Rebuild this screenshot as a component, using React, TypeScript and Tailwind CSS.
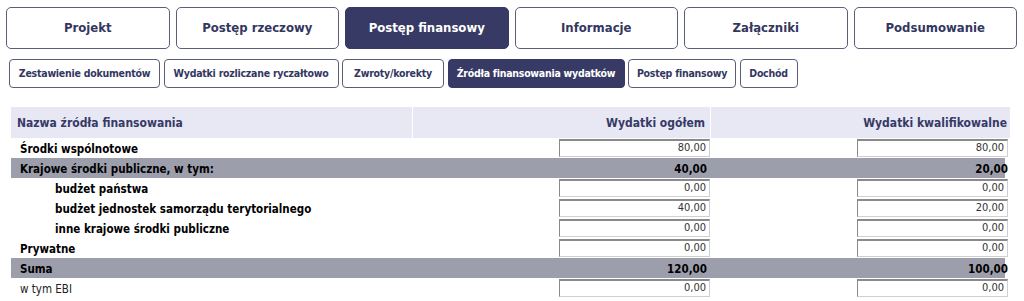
const font = { fontFamily: '"DejaVu Sans Condensed", "DejaVu Sans", sans-serif' };

const tabs = [
  { title: "Projekt" },
  { title: "Postęp rzeczowy" },
  { title: "Postęp finansowy", active: true },
  { title: "Informacje" },
  { title: "Załączniki" },
  { title: "Podsumowanie" },
];

// fixed widths taken from the screen, text is centred inside
const subTabs = [
  { title: "Zestawienie dokumentów", w: "w-[151px]" },
  { title: "Wydatki rozliczane ryczałtowo", w: "w-[175px]" },
  { title: "Zwroty/korekty", w: "w-[102px]" },
  { title: "Źródła finansowania wydatków", w: "w-[177px]", active: true },
  { title: "Postęp finansowy", w: "w-[108px]" },
  { title: "Dochód", w: "w-[58px]" },
];

type Row = {
  label: string;
  total: string;
  eligible: string;
  sum?: boolean;
  indent?: boolean;
  normal?: boolean;
};

const rows: Row[] = [
  { label: "Środki wspólnotowe", total: "80,00", eligible: "80,00" },
  { label: "Krajowe środki publiczne, w tym:", total: "40,00", eligible: "20,00", sum: true },
  { label: "budżet państwa", total: "0,00", eligible: "0,00", indent: true },
  { label: "budżet jednostek samorządu terytorialnego", total: "40,00", eligible: "20,00", indent: true },
  { label: "inne krajowe środki publiczne", total: "0,00", eligible: "0,00", indent: true },
  { label: "Prywatne", total: "0,00", eligible: "0,00" },
  { label: "Suma", total: "120,00", eligible: "100,00", sum: true },
  { label: "w tym EBI", total: "0,00", eligible: "0,00", normal: true },
];

function AmountBox({ value }: { value: string }) {
  return (
    <div className="flex h-[18px] w-[151px] items-center justify-end border border-t-2 border-[#cfcfcf] border-l-[#8a8a8a] border-t-[#8a8a8a] bg-white pr-[3px] text-[11px] text-[#333]">
      {value}
    </div>
  );
}

export default function App() {
  return (
    <div className="min-h-[301px] bg-white pl-[6px] pt-[7px]" style={font}>
      <nav className="grid w-[1011px] grid-cols-6 gap-[6px]">
        {tabs.map((tab) => (
          <div
            key={tab.title}
            className={[
              "flex h-[42px] items-center justify-center rounded-[5px] border-[1.5px] text-[13px] font-bold",
              tab.active
                ? "border-[#363a64] bg-[#363a64] text-white"
                : "border-[#5b5e78] bg-white text-[#33375f]",
            ].join(" ")}
          >
            {tab.title}
          </div>
        ))}
      </nav>

      <nav className="mt-[10px] flex gap-[3.5px] pl-[3px]">
        {subTabs.map((tab) => (
          <div
            key={tab.title}
            className={[
              "flex h-[29px] items-center justify-center whitespace-nowrap rounded-[4px] border-[1.5px] text-[10.5px] font-bold tracking-[-0.25px]",
              tab.w,
              tab.active
                ? "border-[#363a64] bg-[#363a64] text-white"
                : "border-[#5b5e78] bg-white text-[#33375f]",
            ].join(" ")}
          >
            {tab.title}
          </div>
        ))}
      </nav>

      <div className="mt-[19px] w-[999px] pl-[5px]">
        <div className="grid h-[31px] grid-cols-[402px_298px_299px] text-[12px] font-bold text-[#363a66]">
          <div className="flex items-center border-r border-white bg-[#e8e8f5] pl-[6px]">Nazwa źródła finansowania</div>
          <div className="flex items-center justify-end border-r border-white bg-[#e8e8f5] pr-[5px]">Wydatki ogółem</div>
          <div className="flex items-center justify-end bg-[#e8e8f5] pr-[3px]">Wydatki kwalifikowalne</div>
        </div>

        {rows.map((row) => (
          <div
            key={row.label}
            className={[
              "grid h-[20px] grid-cols-[402px_298px_299px] items-center text-[11.5px] text-black",
              row.sum ? "bg-[#9c9eab]" : "",
            ].join(" ")}
          >
            <div
              className={[
                "pt-[3px]",
                row.indent ? "pl-[44px]" : "pl-[9px]",
                row.normal ? "font-normal text-[#222]" : "font-bold",
              ].join(" ")}
            >
              {row.label}
            </div>
            {row.sum ? (
              <>
                <div className="pr-[4px] pt-[3px] text-right font-bold">{row.total}</div>
                <div className="pr-[2px] pt-[3px] text-right font-bold">{row.eligible}</div>
              </>
            ) : (
              <>
                <div className="flex justify-end pr-[1px]">
                  <AmountBox value={row.total} />
                </div>
                <div className="flex justify-end pr-[2px]">
                  <AmountBox value={row.eligible} />
                </div>
              </>
            )}
          </div>
        ))}
      </div>
    </div>
  );
}
